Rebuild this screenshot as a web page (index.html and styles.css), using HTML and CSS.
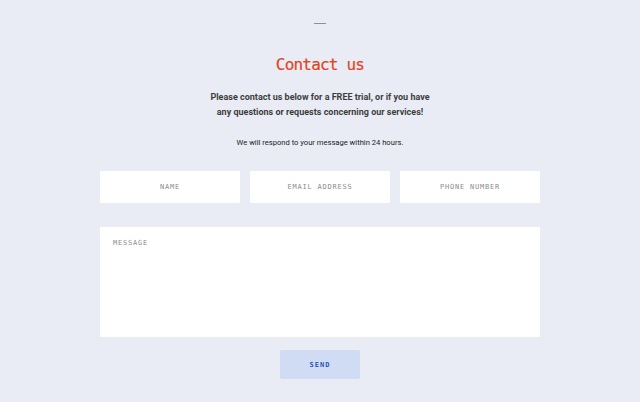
FILE: index.html
```html
<!DOCTYPE html>
<html lang="en">
<head>
    <meta charset="UTF-8">
    <meta name="viewport" content="width=device-width, initial-scale=1.0">
    <title>Contact us</title>
    <link rel="stylesheet" href="styles.css">
</head>
<body>

    <section class="contact">
        <span class="contact-dash"></span>
        <h2 class="contact-title">Contact us</h2>
        <p class="contact-intro">Please contact us below for a FREE trial, or if you have<br>any questions or requests concerning our services!</p>
        <p class="contact-note">We will respond to your message within 24 hours.</p>

        <form class="contact-form">
            <div class="field-row">
                <input type="text" class="field" placeholder="NAME">
                <input type="email" class="field" placeholder="EMAIL ADDRESS">
                <input type="tel" class="field" placeholder="PHONE NUMBER">
            </div>
            <textarea class="field field-message" placeholder="MESSAGE"></textarea>
            <button type="submit" class="send-btn">SEND</button>
        </form>
    </section>

</body>
</html>
```

FILE: styles.css
```css
body {
    margin: 0;
    background-color: #e9ecf5;
    font-family: Roboto, "Liberation Sans", Arial, sans-serif;
    color: #3a3a3a;
}
.contact {
    display: flex;
    flex-direction: column;
    align-items: center;
    padding-top: 23px;
}
.contact-dash {
    display: block;
    width: 12px;
    height: 1px;
    background-color: #8a8f99;
}
.contact-title {
    font-family: "DejaVu Sans Mono", "Liberation Mono", monospace;
    font-weight: normal;
    font-size: 16px;
    letter-spacing: -0.8px;
    color: #e2451f;
    margin: 31px 0 0;
    line-height: 20px;
    -webkit-text-stroke: 0.2px #e2451f;
}
.contact-intro {
    font-size: 9px;
    font-weight: bold;
    line-height: 15px;
    text-align: center;
    color: #3d3d3d;
    margin: 15px 0 0;
}
.contact-note {
    font-size: 7.6px;
    color: #222222;
    margin: 17px 0 0;
    line-height: 12px;
}
.contact-form {
    width: 440px;
    display: flex;
    flex-direction: column;
    align-items: center;
    margin-top: 22px;
}
.field-row {
    width: 100%;
    display: grid;
    grid-template-columns: repeat(3, 1fr);
    gap: 10px;
}
.field {
    box-sizing: border-box;
    border: none;
    border-radius: 1px;
    background-color: #ffffff;
    font-family: "DejaVu Sans Mono", "Liberation Mono", monospace;
    font-size: 7px;
    letter-spacing: 0.8px;
    height: 32px;
    width: 100%;
    text-align: center;
    outline: none;
    padding: 0;
}
.field::placeholder {
    color: #8c8c8c;
}
.field-message {
    height: 110px;
    margin-top: 24px;
    text-align: left;
    padding: 12px 13px;
    resize: none;
}
.send-btn {
    margin-top: 13px;
    width: 80px;
    height: 29px;
    border: none;
    border-radius: 2px;
    background-color: #d0dcf3;
    color: #2d55b8;
    font-family: "DejaVu Sans Mono", "Liberation Mono", monospace;
    font-size: 7px;
    font-weight: bold;
    letter-spacing: 1px;
    cursor: pointer;
}
```
